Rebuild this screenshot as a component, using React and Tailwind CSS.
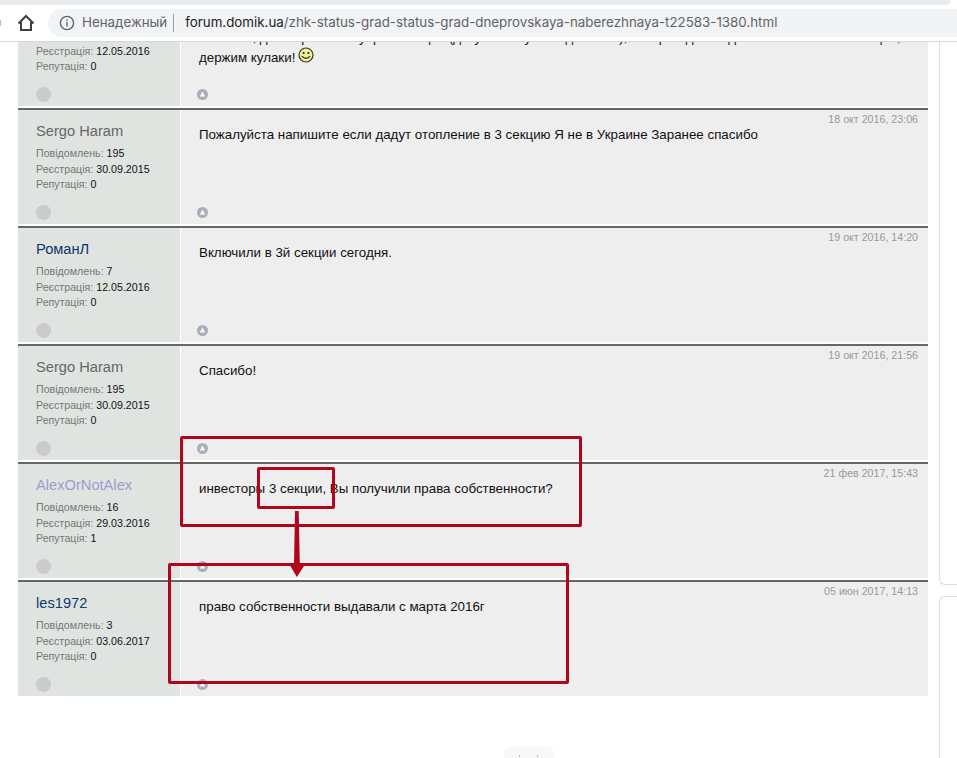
const posts = [
  {
    nameColor: 'text-[#0b3470]',
    reg: '12.05.2016',
    rep: '0',
    date: '',
    lines: ['Спасибо, договорились с управляющей (документы уже подписаны), теперь ждем подключения в нашей секции,', 'держим кулаки!'],
    smile: true,
  },
  { name: 'Sergo Haram', nameColor: 'text-[#666666]', count: '195', reg: '30.09.2015', rep: '0', date: '18 окт 2016, 23:06', lines: ['Пожалуйста напишите если дадут отопление в 3 секцию Я не в Украине Заранее спасибо'] },
  { name: 'РоманЛ', nameColor: 'text-[#0b3470]', count: '7', reg: '12.05.2016', rep: '0', date: '19 окт 2016, 14:20', lines: ['Включили в 3й секции сегодня.'] },
  { name: 'Sergo Haram', nameColor: 'text-[#666666]', count: '195', reg: '30.09.2015', rep: '0', date: '19 окт 2016, 21:56', lines: ['Спасибо!'] },
  { name: 'AlexOrNotAlex', nameColor: 'text-[#9c9cd0]', count: '16', reg: '29.03.2016', rep: '1', date: '21 фев 2017, 15:43', lines: ['инвесторы 3 секции, Вы получили права собственности?'] },
  { name: 'les1972', nameColor: 'text-[#0f3a6d]', count: '3', reg: '03.06.2017', rep: '0', date: '05 июн 2017, 14:13', lines: ['право собственности выдавали с марта 2016г'] },
];

function Stat({ label, value }) {
  return (
    <p className="text-[10.67px] leading-[15.5px] text-[#777777]">
      {label}: <span className="text-[#111111]">{value}</span>
    </p>
  );
}

function Smile() {
  return (
    <svg width="16" height="16" viewBox="0 0 16 16" className="inline-block ml-[3px] -my-[8px] align-[7px]">
      <circle cx="8" cy="8" r="7" fill="#f1ee9e" stroke="#34341c" strokeWidth="1.2" />
      <circle cx="5.6" cy="6" r="1.1" fill="#222" />
      <circle cx="10.4" cy="6" r="1.1" fill="#222" />
      <path d="M3.8 9.2 Q8 13.6 12.2 9.2" fill="none" stroke="#222" strokeWidth="1.1" />
    </svg>
  );
}

function UpIcon() {
  return (
    <svg width="11" height="11" viewBox="0 0 11 11">
      <circle cx="5.5" cy="5.5" r="5.5" fill="#a9afb8" />
      <path d="M5.5 2.6 L8.2 7.4 H2.8 Z" fill="#ffffff" />
    </svg>
  );
}

function Post({ post }) {
  return (
    <div className="border-t-2 border-[#666666] pb-[2px] bg-white">
      <div className="flex h-[114px]">
        <div className="w-[162px] shrink-0 bg-[#e0e4e1] pl-[18px] pr-2 pt-[11px] pb-[4px] flex flex-col">
          {post.name ? (
            <>
              <p className={`text-[14.67px] leading-[20px] mb-[5px] ${post.nameColor}`}>{post.name}</p>
              <Stat label="Повідомлень" value={post.count} />
            </>
          ) : (
            // first post is cut off by the browser bar, its top never shows
            <div className="h-[40.5px]" />
          )}
          <Stat label="Реєстрація" value={post.reg} />
          <Stat label="Репутація" value={post.rep} />
          <div className="mt-auto w-[15px] h-[15px] rounded-full bg-[#cbcbcb]" />
        </div>
        <div className="flex-1 ml-px bg-[#eeeeee] pl-[18px] pr-[10px] pt-[3px] pb-[6px] flex flex-col">
          <p className="h-[12px] text-right text-[10.67px] leading-[12px] text-[#999999]">{post.date}</p>
          <div className={`text-[13.33px] leading-[20px] text-[#111111] ${post.name ? '' : 'mt-[21px]'}`}>
            {post.lines.map((line, i) => (
              <p key={i} className="whitespace-nowrap">
                {line}
                {post.smile && i === post.lines.length - 1 && <Smile />}
              </p>
            ))}
          </div>
          <div className="mt-auto -ml-[2px] h-[11px]">
            <UpIcon />
          </div>
        </div>
      </div>
    </div>
  );
}

function Toolbar() {
  return (
    <div className="h-[42px] bg-white border-b border-[#d5d7da]">
      <div className="h-[5px] bg-[#e8ebee] rounded-br-lg mr-[6px]" />
      <div className="flex items-center h-[36px]">
        <div className="w-px h-[6px] bg-[#bbbbbb] shrink-0" />
        <svg width="18" height="18" viewBox="0 0 18 18" className="ml-[16px] shrink-0" fill="none" stroke="#3c4043" strokeWidth="2">
          <path d="M1.5 9.5 L9 2 L16.5 9.5 M4 8 V16 H14 V8" />
        </svg>
        <div className="ml-[13px] flex-1 h-[28px] bg-[#f1f3f4] rounded-l-full flex items-center pl-[11px] font-['Inter',sans-serif] text-[13.33px] whitespace-nowrap">
          <svg width="16" height="16" viewBox="0 0 16 16" fill="none" stroke="#5f6368" strokeWidth="1.4" className="shrink-0">
            <circle cx="8" cy="8" r="6.6" />
            <path d="M8 7 V11.5 M8 4.4 V6" />
          </svg>
          <span className="ml-[7px] text-[#5f6368]">Ненадежный</span>
          <span className="ml-[6px] w-px h-[18px] bg-[#9aa0a6]" />
          <p className="ml-[11px] text-[#5f6368]">
            <span className="text-[#202124]">forum.domik.ua</span>/zhk-status-grad-status-grad-dneprovskaya-naberezhnaya-t22583-1380.html
          </p>
        </div>
      </div>
    </div>
  );
}

function Annotations() {
  return (
    <>
      <div className="absolute left-[180px] top-[436px] w-[402px] h-[91px] border-[3px] border-[#b0051c] rounded-[2px]" />
      <div className="absolute left-[257px] top-[467px] w-[78px] h-[42px] border-[3px] border-[#b0051c] rounded-[2px]" />
      <div className="absolute left-[168px] top-[563px] w-[401px] h-[121px] border-[3px] border-[#b0051c] rounded-[2px]" />
      <svg className="absolute left-[285px] top-[510px]" width="24" height="70" viewBox="0 0 24 70">
        <path d="M10 1 H13.7 L14.8 54 H20.3 L11.8 67 L4.3 54 H9 Z" fill="#b0051c" />
      </svg>
    </>
  );
}

export default function App() {
  return (
    <div className="relative w-[957px] h-[758px] overflow-hidden bg-white font-['Liberation_Sans',sans-serif]">
      <Toolbar />
      <div className="h-[716px] overflow-hidden">
        <div className="flex -mt-[52px] items-start">
          <div className="ml-[18px] w-[910px] shrink-0">
            {posts.map((post, i) => (
              <Post key={i} post={post} />
            ))}
          </div>
          <div className="ml-[11px] flex-1 flex flex-col gap-[11px]">
            <div className="h-[595px] border-l border-b border-[#dddddd] rounded-bl-md" />
            <div className="h-[170px] border-l border-t border-[#dddddd] rounded-tl-md" />
          </div>
        </div>
      </div>
      <div className="absolute left-[504px] top-[747px] w-[50px] h-[20px] bg-[#f8f8f8] rounded-md">
        <span className="absolute left-[15px] top-[8px] w-px h-[2px] bg-[#bbbbbb]" />
        <span className="absolute left-[33px] top-[8px] w-px h-[2px] bg-[#bbbbbb]" />
      </div>
      <Annotations />
    </div>
  );
}
